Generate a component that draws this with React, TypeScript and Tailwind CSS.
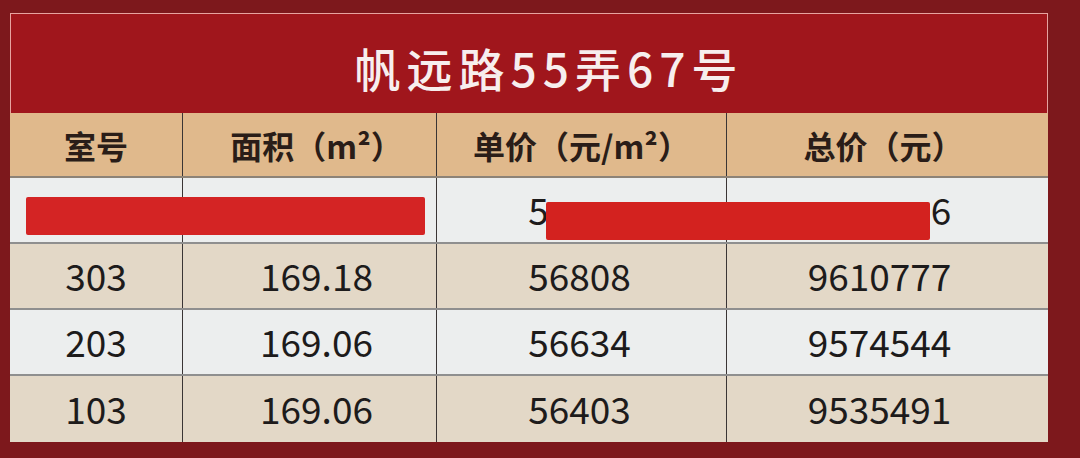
const cols = 'grid grid-cols-[173px_254px_290px_321px]'

const rows = [
  { room: '303', area: '169.18', unit: '56808', total: '9610777' },
  { room: '203', area: '169.06', unit: '56634', total: '9574544' },
  { room: '103', area: '169.06', unit: '56403', total: '9535491' },
]

function Cell({ children, last }: { children: React.ReactNode; last?: boolean }) {
  return (
    <div className={`flex items-center justify-center ${last ? '' : 'border-r border-[#3a3535]'}`}>
      {children}
    </div>
  )
}

export default function App() {
  return (
    <div
      className="w-[1080px] h-[458px] bg-[#7d181c] pl-[10px] pt-[13px] overflow-hidden"
      style={{ fontFamily: '"Noto Sans CJK SC", "Noto Sans", sans-serif' }}
    >
      <div className="w-[1038px] relative">
        {/* Title band */}
        <div className="h-[100px] bg-[#a0161c] border-t border-l border-r border-[#e7a3a0] flex items-center justify-center pl-[40px]">
          <h1 className="text-[46px] leading-none text-[#f7eeee] font-medium tracking-[6px] pt-[6px]">
            帆远路55弄67号
          </h1>
        </div>

        {/* Header row */}
        <div className={`${cols} h-[65px] bg-[#e0b98c] border-b-2 border-[#8d8377] text-[32px] font-bold text-[#2a1d18]`}>
          <Cell>室号</Cell>
          <Cell><span className="pl-[14px]">面积（m²）</span></Cell>
          <Cell>单价（元/m²）</Cell>
          <Cell last><span className="pr-[8px]">总价（元）</span></Cell>
        </div>

        {/* Redacted row */}
        <div className={`${cols} h-[66px] bg-[#eceeee] border-b-2 border-[#8f8f8f] text-[37px] text-[#1d1b1b]`}>
          <Cell>{''}</Cell>
          <Cell>{''}</Cell>
          <Cell>
            <span className="pr-[4px]">5<span className="invisible">6000</span></span>
          </Cell>
          <Cell last>
            <span className="pr-[16px]"><span className="invisible">000000</span>6</span>
          </Cell>
        </div>

        {rows.map((r, i) => (
          <div
            key={r.room}
            className={`${cols} h-[66px] text-[37px] text-[#1d1b1b] ${i % 2 === 0 ? 'bg-[#e3d8c7]' : 'bg-[#eceeee]'} ${i < rows.length - 1 ? 'border-b-2 border-[#8f8f8f]' : ''}`}
          >
            <Cell>{r.room}</Cell>
            <Cell><span className="pl-[14px]">{r.area}</span></Cell>
            <Cell><span className="pr-[4px]">{r.unit}</span></Cell>
            <Cell last><span className="pr-[16px]">{r.total}</span></Cell>
          </div>
        ))}

        {/* redaction marks */}
        <div className="absolute left-[16px] top-[184px] w-[399px] h-[38px] bg-[#d42424] rounded-[2px]" />
        <div className="absolute left-[536px] top-[189px] w-[384px] h-[38px] bg-[#d3221f] rounded-[2px]" />
      </div>
    </div>
  )
}
